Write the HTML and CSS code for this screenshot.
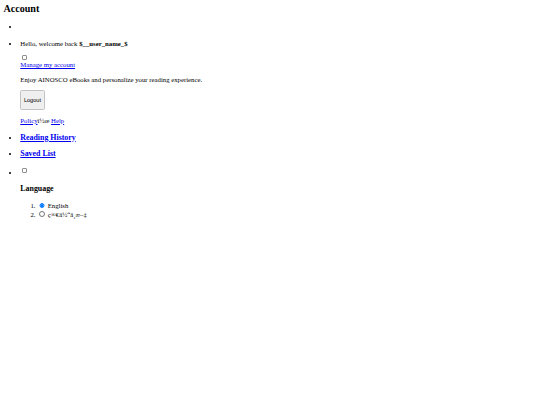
FILE: index.html
```html
<!DOCTYPE html>
<html lang="en">
<head>
<meta charset="utf-8">
<title>Account</title>
<link rel="stylesheet" href="styles.css">
</head>
<body class="page">
<h2 class="title">Account</h2>
<ul class="menu">
  <li class="avatar"></li>
  <li class="user">
    <p class="greet">Hello, welcome back <b>$__user_name_$</b></p>
    <input type="checkbox" class="toggle toggle-block">
    <a href="#" class="link">Manage my account</a>
    <p class="text">Enjoy AINOSCO eBooks and personalize your reading experience.</p>
    <button class="logout" type="button">Logout</button>
    <p class="text"><a href="#" class="link">Policy</a>&iuml;&frac12;&oelig; <a href="#" class="link">Help</a></p>
  </li>
  <li><h3 class="item"><a href="#" class="link">Reading History</a></h3></li>
  <li><h3 class="item"><a href="#" class="link">Saved List</a></h3></li>
  <li class="lang">
    <input type="checkbox" class="toggle">
    <h3 class="item">Language</h3>
    <ol class="langs">
      <li><input type="radio" class="radio" name="lang" checked> English</li>
      <li><input type="radio" class="radio" name="lang"> &ccedil;&reg;&euro;&auml;&frac12;&ldquo;&auml;&cedil;&shy;&aelig;&ndash;&Dagger;</li>
    </ol>
  </li>
</ul>
</body>
</html>
```

FILE: styles.css
```css
.page {
  margin: 3.4px;
  font-family: "Liberation Serif", "Times New Roman", serif;
  font-size: 6.75px;
  line-height: 7.8px;
  color: #000;
  background: #fff;
}
.title {
  font-size: 10.125px;
  line-height: 11.6px;
  margin: 0 0 7.8px;
}
.menu {
  margin: 0;
  padding-left: 16.9px;
}
.avatar {
  min-height: 7.8px;
}
.link {
  color: #0000ee;
}
.greet {
  margin: 9.5px 0 6.8px;
}
.toggle {
  appearance: none;
  -webkit-appearance: none;
  box-sizing: border-box;
  width: 5.5px;
  height: 5.5px;
  margin: 1.3px 1.3px 1.3px 1.7px;
  border: 0.6px solid #8f8f8f;
  border-radius: 1px;
  background: #fff;
  vertical-align: baseline;
}
.toggle-block {
  display: block;
  margin-bottom: 1px;
}
.text {
  margin: 6.75px 0;
}
.logout {
  display: block;
  box-sizing: border-box;
  font-family: "Liberation Sans", Arial, sans-serif;
  font-size: 5.6px;
  height: 19.8px;
  padding: 0 2.6px;
  color: #000;
  background: #efefef;
  border: 1px solid #c2c2c2;
  border-radius: 1.5px;
}
.item {
  font-size: 7.9px;
  line-height: 9.1px;
  margin: 7.9px 0;
}
.langs {
  padding-left: 16.9px;
  margin: 7.9px 0;
}
.langs li {
  line-height: 8px;
}
.radio {
  width: 5.5px;
  height: 5.5px;
  margin: 1.3px 1.3px 0 2.1px;
}
```
